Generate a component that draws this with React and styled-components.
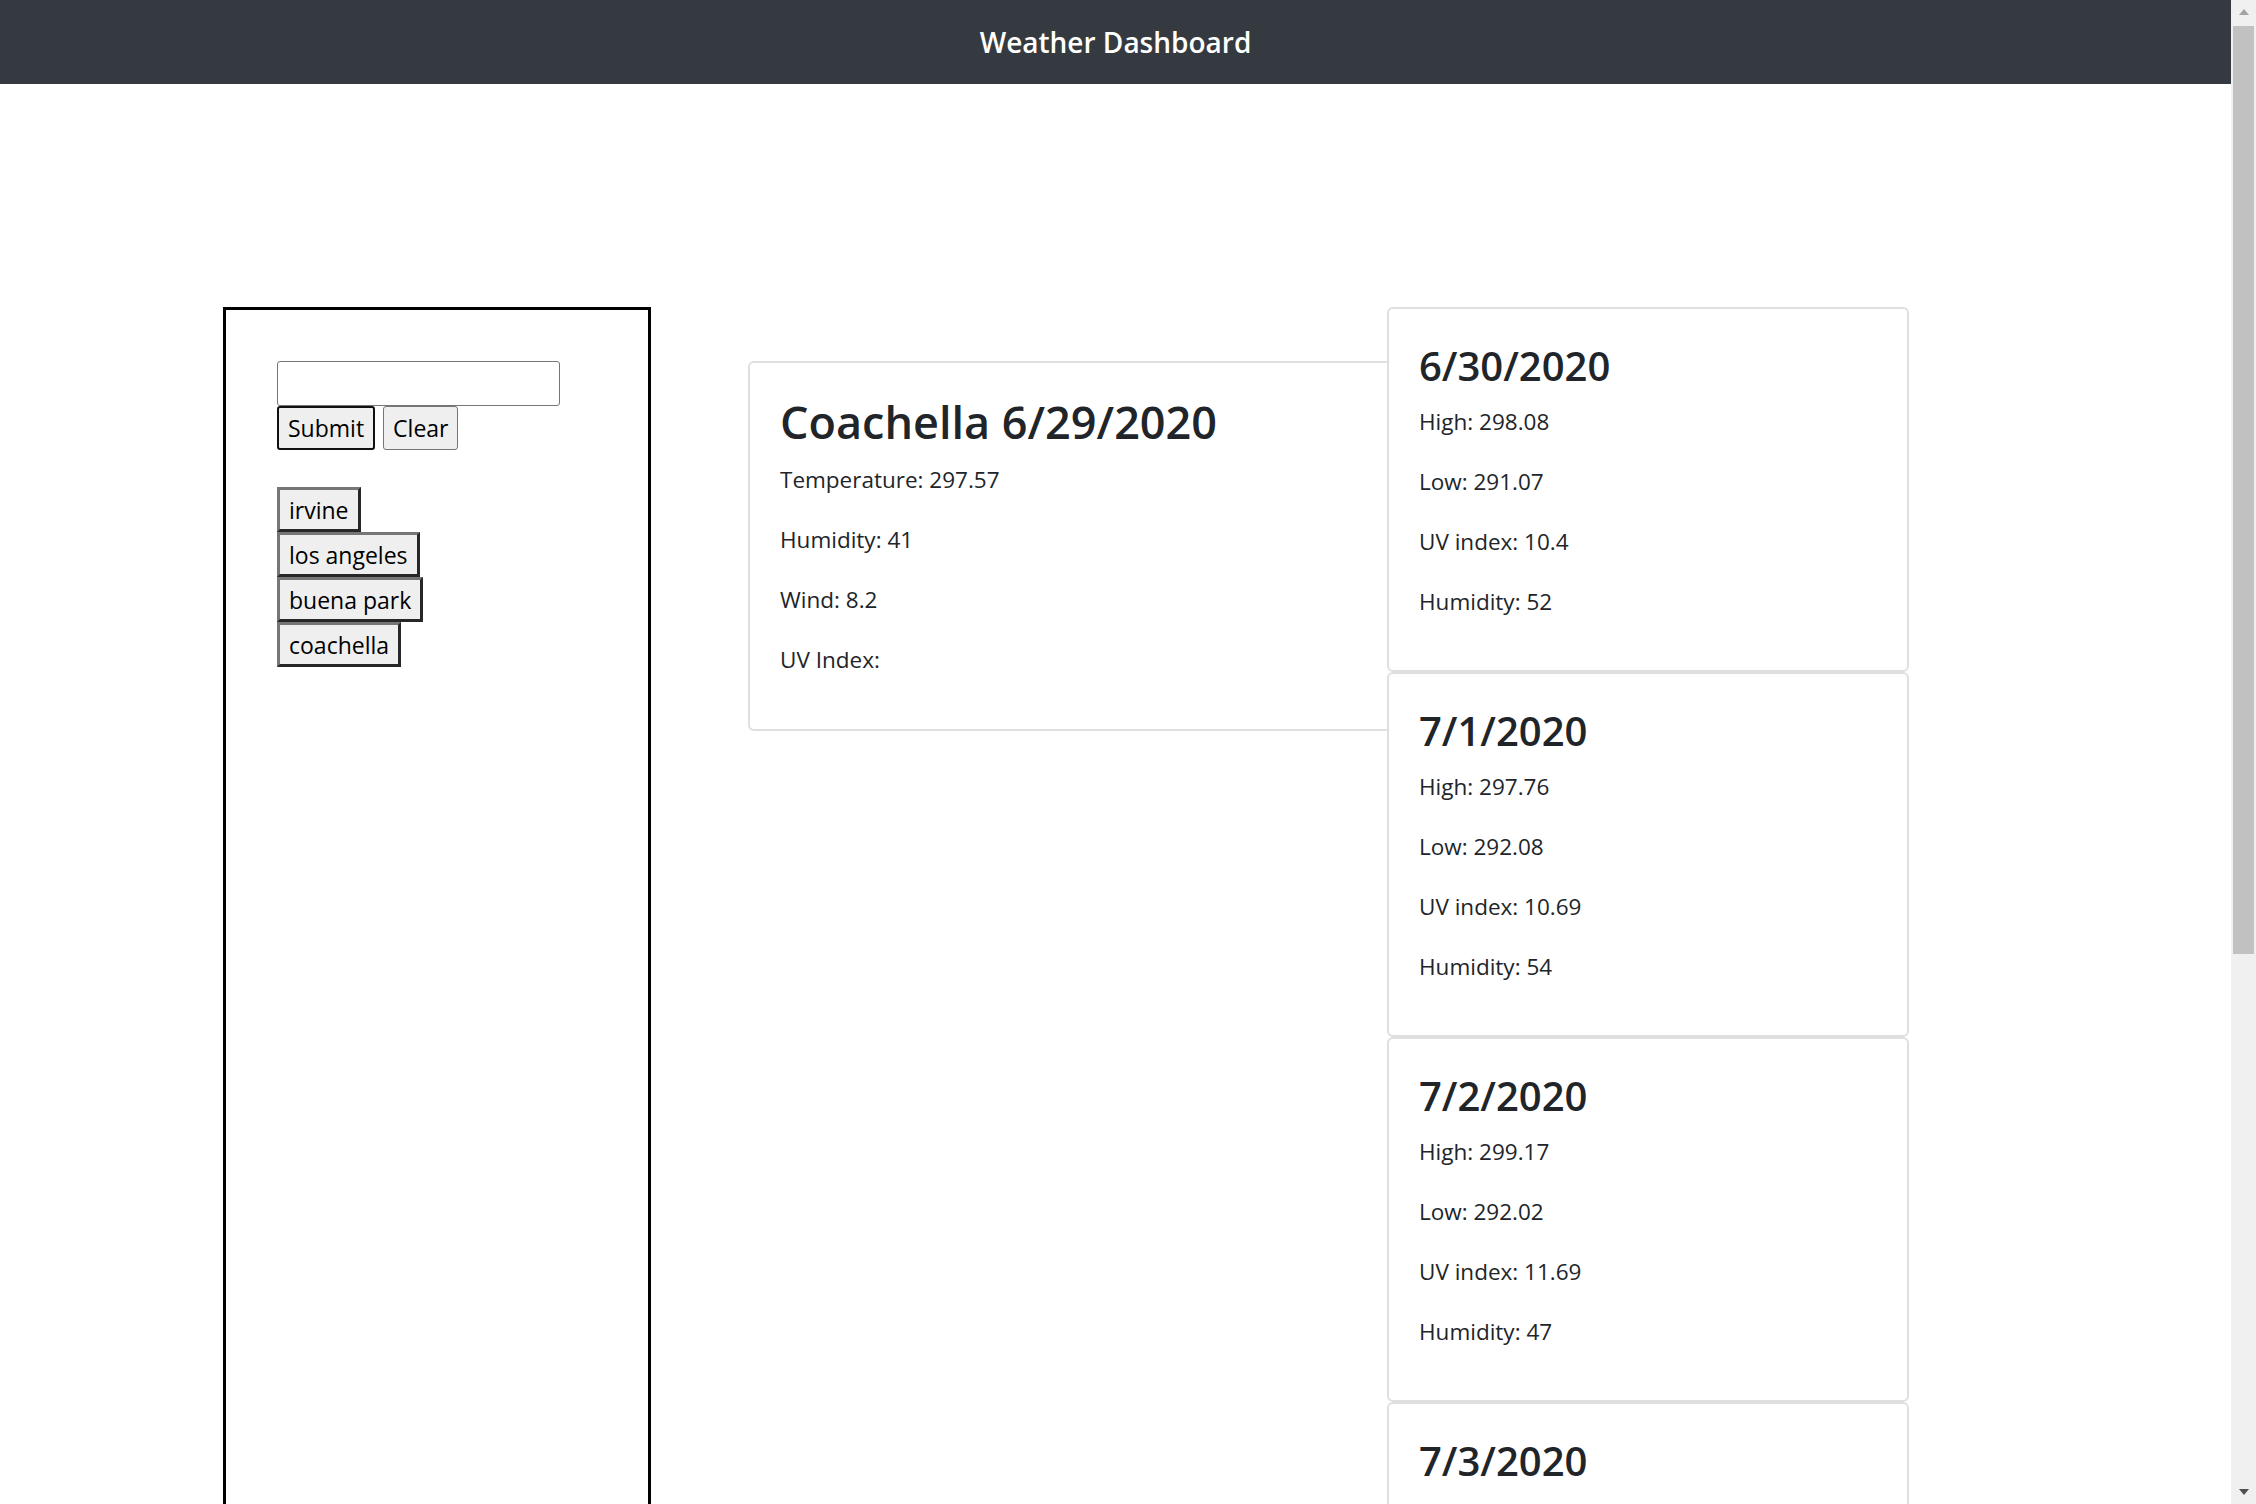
import React from "react";
import styled, { createGlobalStyle } from "styled-components";

const GlobalStyle = createGlobalStyle`
  html, body {
    margin: 0;
    padding: 0;
    overflow: hidden;
    background: #fff;
  }
  body {
    font-family: "Open Sans", "Noto Sans", sans-serif;
    color: #212529;
  }
`;

const Page = styled.div`
  margin-right: 25px;
`;

const Header = styled.header`
  height: 84px;
  background: #343a40;
  display: flex;
  align-items: center;
  justify-content: center;
`;

const Brand = styled.h1`
  margin: 0;
  color: #fff;
  font-size: 28px;
  font-weight: 600;
  line-height: 1.5;
`;

const Main = styled.main`
  display: flex;
  align-items: flex-start;
  padding: 223px 0 0 223px;
`;

const SearchPanel = styled.aside`
  width: 428px;
  height: 1400px;
  box-sizing: border-box;
  border: 3px solid #000;
  padding: 51px;
  flex-shrink: 0;
`;

const SearchInput = styled.input`
  display: block;
  width: 283px;
  height: 45px;
  box-sizing: border-box;
  border: 1.5px solid #767676;
  border-radius: 3px;
  font-size: 22px;
  padding: 2px 6px;
`;

const ButtonRow = styled.div`
  display: flex;
  gap: 8px;
`;

const FormButton = styled.button`
  height: 44px;
  box-sizing: border-box;
  padding: 0 9px;
  background: #efefef;
  border: ${(p) => (p.$focused ? "2.5px solid #111" : "1.5px solid #767676")};
  border-radius: 3px;
  font-family: inherit;
  font-size: 23px;
  color: #000;
`;

const CityList = styled.div`
  margin-top: 37px;
  display: flex;
  flex-direction: column;
  align-items: flex-start;
`;

const CityButton = styled.button`
  height: 45px;
  box-sizing: border-box;
  padding: 0 9px;
  background: #efefef;
  border-style: solid;
  border-width: 3px;
  border-color: #767676 #272727 #272727 #767676;
  border-radius: 0;
  font-family: inherit;
  font-size: 23px;
  color: #000;
`;

const CurrentCard = styled.section`
  margin: 54px 0 0 97px;
  width: 639px;
  height: 370px;
  box-sizing: border-box;
  border: 2px solid #dfdfdf;
  border-right: none;
  border-radius: 6px 0 0 6px;
  padding: 32px 30px 30px;
  flex-shrink: 0;
`;

const CurrentTitle = styled.h2`
  margin: 0 0 13px;
  font-size: 45px;
  font-weight: 600;
  line-height: 1.2;
`;

const Line = styled.p`
  margin: 0 0 24px;
  font-size: 22.5px;
  line-height: 36px;
`;

const ForecastColumn = styled.div`
  width: 522px;
  display: flex;
  flex-direction: column;
  flex-shrink: 0;
`;

const ForecastCard = styled.div`
  height: 365px;
  box-sizing: border-box;
  border: 2px solid #dfdfdf;
  border-radius: 6px;
  padding: 33px 30px 30px;
`;

const ForecastTitle = styled.h3`
  margin: 0 0 14px;
  font-size: 40px;
  font-weight: 600;
  line-height: 1.2;
`;

const Scrollbar = styled.div`
  position: fixed;
  top: 0;
  right: 0;
  width: 25px;
  height: 100vh;
  background: #f0f0f0;
`;

const Thumb = styled.div`
  position: absolute;
  top: 26px;
  left: 2px;
  width: 21px;
  height: 928px;
  background: #c1c1c1;
`;

const Arrow = styled.div`
  position: absolute;
  left: 8px;
  width: 0;
  height: 0;
  border-left: 5px solid transparent;
  border-right: 5px solid transparent;
  ${(p) =>
    p.$down
      ? "bottom: 9px; border-top: 6px solid #505050;"
      : "top: 9px; border-bottom: 6px solid #a3a3a3;"}
`;

const cities = ["irvine", "los angeles", "buena park", "coachella"];

const forecast = [
  { date: "6/30/2020", high: "298.08", low: "291.07", uv: "10.4", humidity: "52" },
  { date: "7/1/2020", high: "297.76", low: "292.08", uv: "10.69", humidity: "54" },
  { date: "7/2/2020", high: "299.17", low: "292.02", uv: "11.69", humidity: "47" },
  { date: "7/3/2020", high: "300.12", low: "292.4", uv: "11.2", humidity: "45" },
];

export default function App() {
  return (
    <Page>
      <GlobalStyle />
      <Header>
        <Brand>Weather Dashboard</Brand>
      </Header>
      <Main>
        <SearchPanel>
          <SearchInput type="text" />
          <ButtonRow>
            <FormButton $focused>Submit</FormButton>
            <FormButton>Clear</FormButton>
          </ButtonRow>
          <CityList>
            {cities.map((c) => (
              <CityButton key={c}>{c}</CityButton>
            ))}
          </CityList>
        </SearchPanel>
        <CurrentCard>
          <CurrentTitle>Coachella 6/29/2020</CurrentTitle>
          <Line>Temperature: 297.57</Line>
          <Line>Humidity: 41</Line>
          <Line>Wind: 8.2</Line>
          <Line>UV Index:</Line>
        </CurrentCard>
        <ForecastColumn>
          {forecast.map((d) => (
            <ForecastCard key={d.date}>
              <ForecastTitle>{d.date}</ForecastTitle>
              <Line>High: {d.high}</Line>
              <Line>Low: {d.low}</Line>
              <Line>UV index: {d.uv}</Line>
              <Line>Humidity: {d.humidity}</Line>
            </ForecastCard>
          ))}
        </ForecastColumn>
      </Main>
      <Scrollbar>
        <Arrow />
        <Thumb />
        <Arrow $down />
      </Scrollbar>
    </Page>
  );
}
